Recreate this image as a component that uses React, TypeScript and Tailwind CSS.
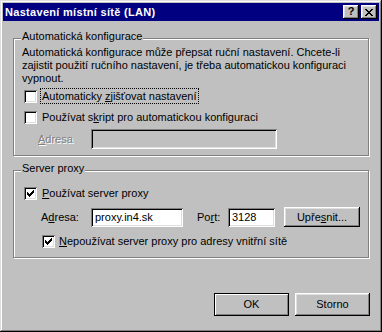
import type { ReactNode } from "react";

const raised =
  "bg-[#c0c0c0] shadow-[inset_-1px_-1px_0_#000,inset_1px_1px_0_#fff,inset_-2px_-2px_0_#808080,inset_2px_2px_0_#dfdfdf]";
const sunken =
  "shadow-[inset_1px_1px_0_#808080,inset_-1px_-1px_0_#fff,inset_2px_2px_0_#000,inset_-2px_-2px_0_#dfdfdf]";

const CheckBox = ({ checked, className = "" }: { checked?: boolean; className?: string }) => (
  <span className={`relative block h-[13px] w-[13px] shrink-0 bg-white ${sunken} ${className}`}>
    {checked && (
      <svg
        width="7"
        height="7"
        viewBox="0 0 7 7"
        shapeRendering="crispEdges"
        className="absolute left-[3px] top-[3px]"
      >
        <path
          fill="#000"
          d="M6 0h1v3h-1zM5 1h1v3h-1zM4 2h1v3h-1zM0 2h1v3h-1zM1 3h1v3h-1zM2 4h1v3h-1zM3 3h1v3h-1z"
        />
      </svg>
    )}
  </span>
);

const Group = ({
  label,
  className = "",
  children,
}: {
  label: string;
  className?: string;
  children: ReactNode;
}) => (
  <div
    className={`relative ml-[10px] w-[356px] border border-[#808080] shadow-[inset_1px_1px_0_#fff,1px_1px_0_#fff] ${className}`}
  >
    <span className="absolute left-[7px] top-[-9px] bg-[#c0c0c0] px-[1px] leading-[13px]">
      {label}
    </span>
    {children}
  </div>
);

const App = () => {
  return (
    <div className="h-[332px] w-[382px] bg-[#c0c0c0] p-[3px] font-['Liberation_Sans',Arial,sans-serif] text-[11px] leading-[13px] text-black shadow-[inset_-1px_-1px_0_#000,inset_1px_1px_0_#dfdfdf,inset_-2px_-2px_0_#808080,inset_2px_2px_0_#fff]">
      {/* title bar */}
      <div className="flex h-[18px] items-center justify-between bg-[#000080] pl-[2px] pr-[2px]">
        <span className="font-bold tracking-[0.3px] text-white">Nastavení místní sítě (LAN)</span>
        <div className="flex gap-[2px]">
          <span className={`flex h-[14px] w-[16px] items-center justify-center pb-[1px] text-[11px] font-bold ${raised}`}>
            ?
          </span>
          <span className={`flex h-[14px] w-[16px] items-center justify-center ${raised}`}>
            <svg width="8" height="7" viewBox="0 0 8 7" shapeRendering="crispEdges">
              <path
                fill="#000"
                d="M0 0h2v1h-2zM6 0h2v1h-2zM1 1h2v1h-2zM5 1h2v1h-2zM2 2h4v1h-4zM3 3h2v1h-2zM2 4h4v1h-4zM1 5h2v1h-2zM5 5h2v1h-2zM0 6h2v1h-2zM6 6h2v1h-2z"
              />
            </svg>
          </span>
        </div>
      </div>

      {/* Automatic configuration */}
      <Group label="Automatická konfigurace" className="mt-[17px] h-[118px]">
        <div className="flex flex-col pl-[8px] pt-[7px]">
          <p>
            Automatická konfigurace může přepsat ruční nastavení. Chcete-li
            <br />
            zajistit použití ručního nastavení, je třeba automatickou konfiguraci
            <br />
            vypnout.
          </p>
          <div className="mt-[3px] flex h-[16px] items-center">
            <CheckBox className="ml-[2px]" />
            <span className="ml-[3px] border border-dotted border-black px-[1px] leading-[14px]">
              Automaticky <span className="underline">z</span>jišťovat nastavení
            </span>
          </div>
          <div className="mt-[5px] flex h-[16px] items-center">
            <CheckBox className="ml-[2px]" />
            <span className="ml-[3px] border border-transparent px-[1px] leading-[14px]">
              Používat s<span className="underline">k</span>ript pro automatickou konfiguraci
            </span>
          </div>
          <div className="mt-[4px] flex h-[20px] items-center">
            <span className="ml-[16px] w-[53px] text-[#808080] [text-shadow:1px_1px_0_#fff]">
              <span className="underline">A</span>dresa
            </span>
            <span className={`block h-[20px] w-[186px] ${sunken}`} />
          </div>
        </div>
      </Group>

      {/* Proxy server */}
      <Group label="Server proxy" className="mt-[14px] h-[88px]">
        <div className="flex flex-col pl-[8px] pt-[14px]">
          <div className="flex h-[16px] items-center">
            <CheckBox checked className="ml-[2px]" />
            <span className="ml-[3px] border border-transparent px-[1px] leading-[14px]">
              <span className="underline">P</span>oužívat server proxy
            </span>
          </div>
          <div className="mt-[6px] flex h-[20px] items-center">
            <span className="ml-[19px] w-[50px]">
              A<span className="underline">d</span>resa:
            </span>
            <span className={`flex h-[19px] w-[92px] items-center bg-white px-[4px] ${sunken}`}>
              proxy.in4.sk
            </span>
            <span className="ml-[14px] w-[31px]">
              Po<span className="underline">r</span>t:
            </span>
            <span className={`flex h-[19px] w-[47px] items-center bg-white px-[4px] ${sunken}`}>
              3128
            </span>
            <button className={`ml-[9px] flex h-[20px] w-[76px] items-center justify-center ${raised}`}>
              Upře<span className="underline">s</span>nit...
            </button>
          </div>
          <div className="mt-[6px] flex h-[16px] items-center">
            <CheckBox checked className="ml-[20px]" />
            <span className="ml-[3px] border border-transparent leading-[14px]">
              <span className="underline">N</span>epoužívat server proxy pro adresy vnitřní sítě
            </span>
          </div>
        </div>
      </Group>

      {/* dialog buttons */}
      <div className="mt-[35px] flex justify-end gap-[6px] pr-[9px]">
        <button className="flex h-[23px] w-[75px] items-center justify-center bg-[#c0c0c0] shadow-[inset_0_0_0_1px_#000,inset_2px_2px_0_#fff,inset_-2px_-2px_0_#808080]">
          OK
        </button>
        <button className={`flex h-[23px] w-[75px] items-center justify-center ${raised}`}>
          Storno
        </button>
      </div>
    </div>
  );
};

export default App;
